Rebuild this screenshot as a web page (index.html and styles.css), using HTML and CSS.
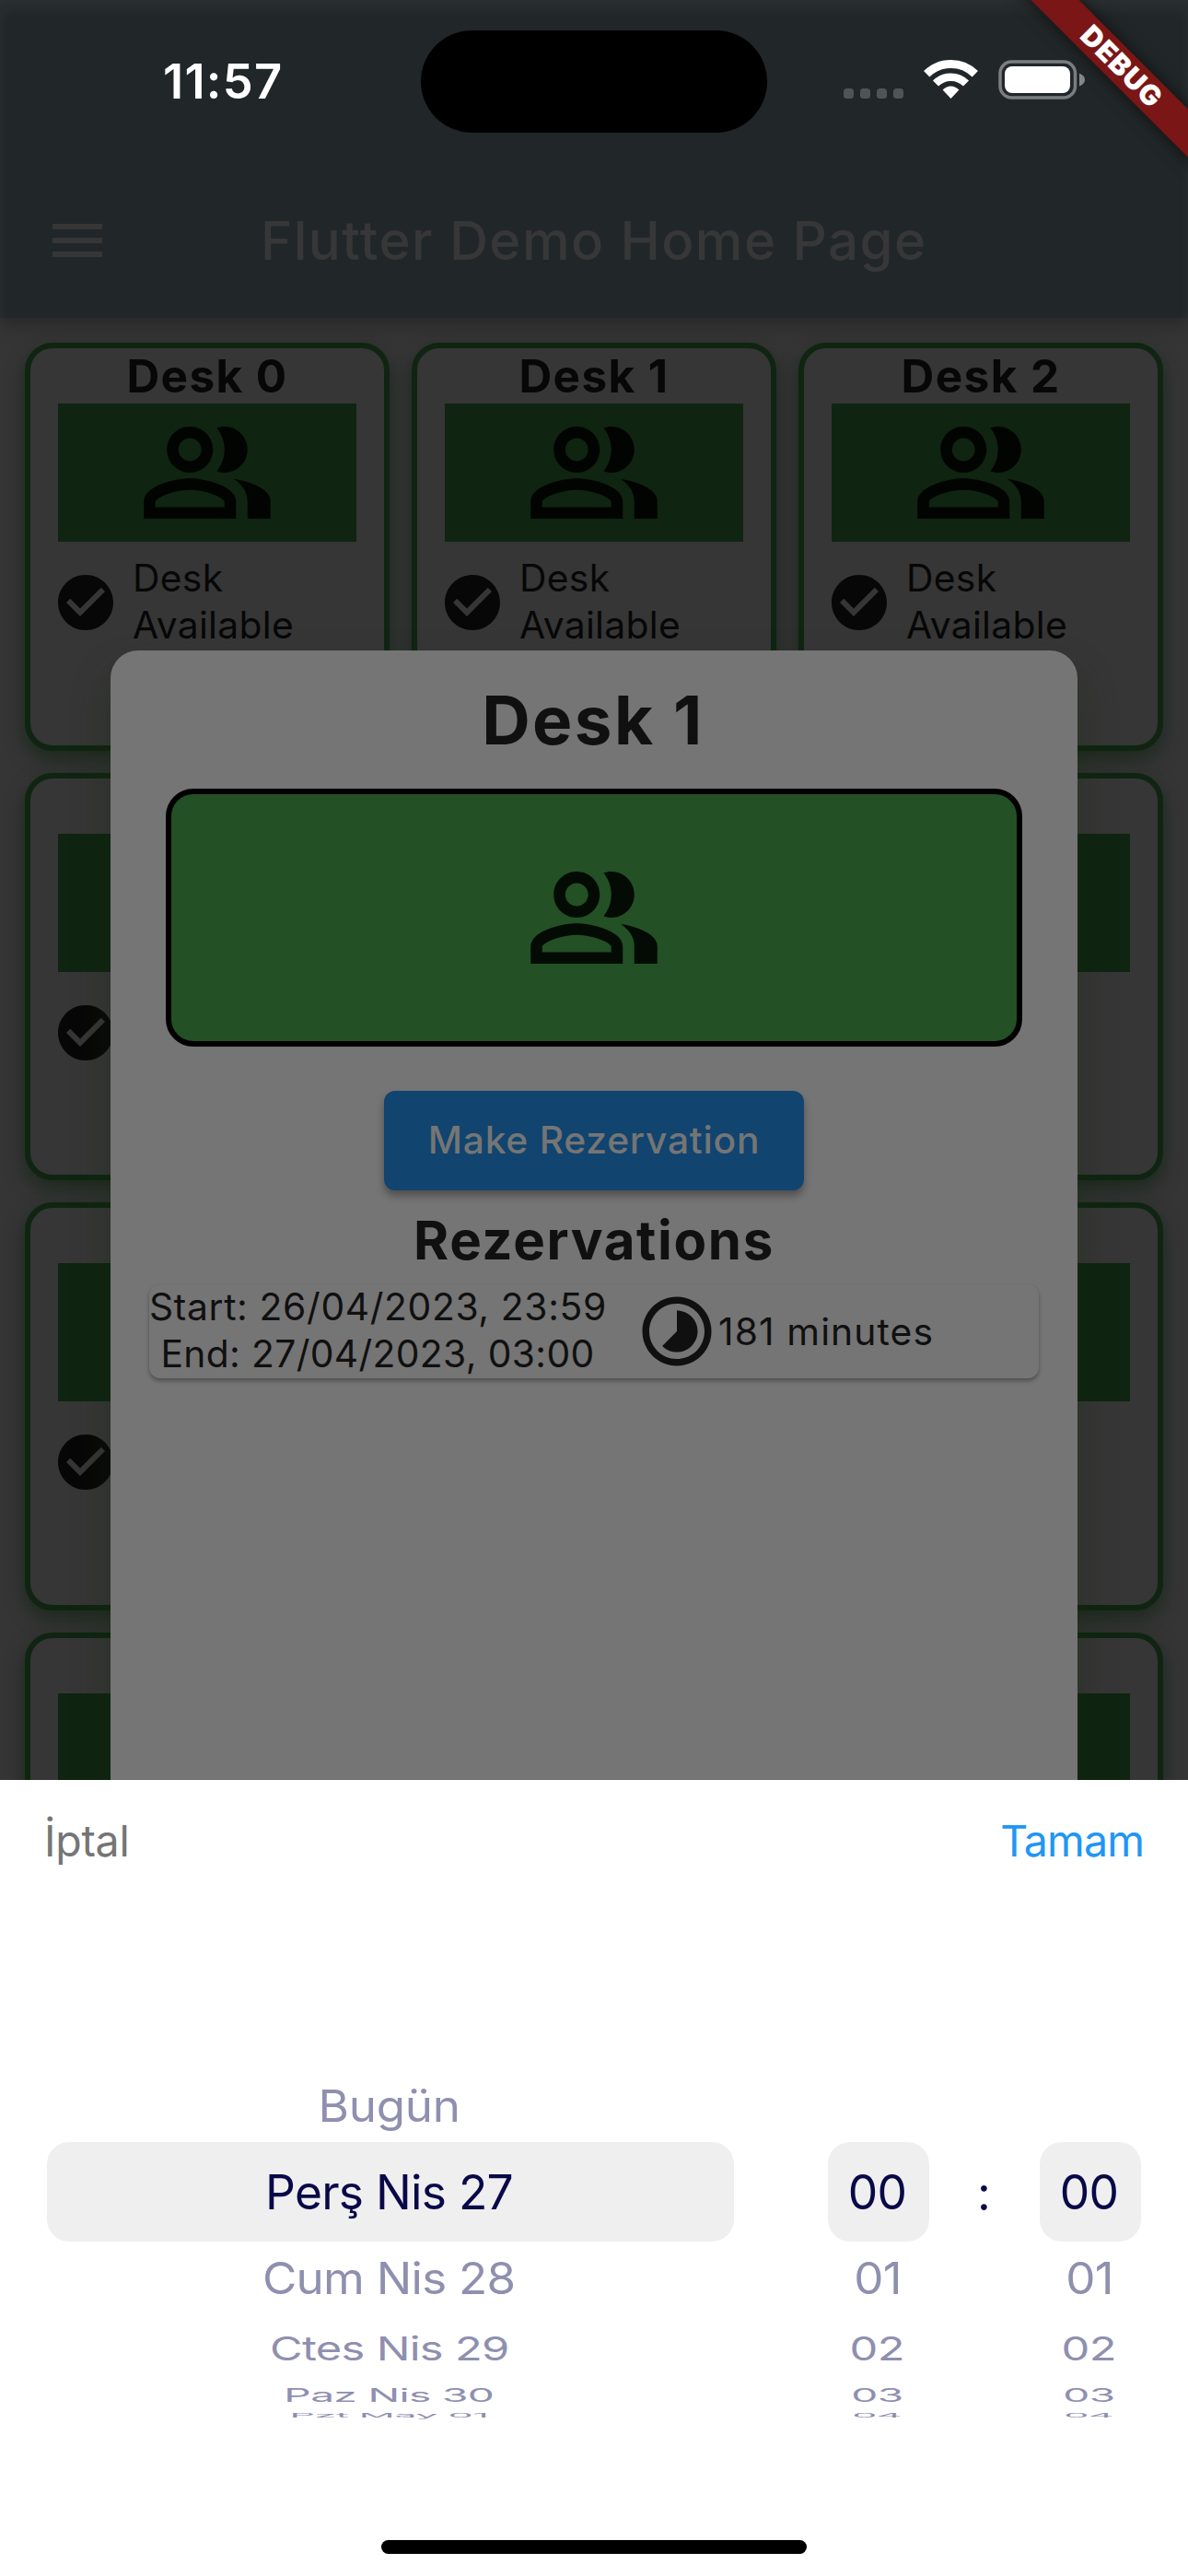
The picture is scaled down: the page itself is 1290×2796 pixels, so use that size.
FILE: index.html
```html
<!DOCTYPE html>
<html lang="tr">
<head>
<meta charset="utf-8">
<title>Flutter Demo Home Page</title>
<link rel="stylesheet" href="styles.css">
</head>
<body>
<svg class="defs" width="0" height="0" aria-hidden="true">
  <symbol id="people" viewBox="0 0 24 24"><path d="M16.67 13.13C18.04 14.06 19 15.32 19 17v3h4v-3c0-2.18-3.57-3.47-6.33-3.87zM15 12c2.21 0 4-1.79 4-4s-1.79-4-4-4c-.47 0-.91.1-1.33.24C14.5 5.27 15 6.58 15 8s-.5 2.73-1.33 3.76c.42.14.86.24 1.33.24zM9 12c2.21 0 4-1.79 4-4s-1.79-4-4-4-4 1.79-4 4 1.79 4 4 4zm0-6c1.1 0 2 .9 2 2s-.9 2-2 2-2-.9-2-2 .9-2 2-2zM9 13c-2.67 0-8 1.34-8 4v3h16v-3c0-2.66-5.33-4-8-4zm6 5H3v-.99C3.2 16.29 6.3 15 9 15s5.8 1.29 6 2v1z"/></symbol>
  <symbol id="check" viewBox="0 0 24 24"><path d="M12 2C6.48 2 2 6.48 2 12s4.48 10 10 10 10-4.48 10-10S17.52 2 12 2zm-2 15l-5-5 1.41-1.41L10 14.17l7.59-7.59L19 8l-9 9z"/></symbol>
</svg>

<div class="screen">
  <header class="appbar">
    <div class="status">
      <span class="time">11:57</span>
      <span class="island"></span>
      <svg class="indicators" width="264" height="47" viewBox="0 0 264 47">
        <g fill="#505458"><rect y="31" width="11" height="11" rx="3.5"/><rect x="18" y="31" width="11" height="11" rx="3.5"/><rect x="36" y="31" width="11" height="11" rx="3.5"/><rect x="54" y="31" width="11" height="11" rx="3.5"/></g>
        <g fill="none" stroke="#fff"><path stroke-width="9" d="M90.2 15.3A37.5 37.5 0 0 1 142.8 15.3"/><path stroke-width="8.5" d="M100 25.6A23.2 23.2 0 0 1 133 25.6"/></g>
        <path fill="#fff" d="M116.5 42L107.6 32.6Q116.5 24.5 125.4 32.6Z"/>
        <rect x="170" y="2" width="81.5" height="39" rx="12.5" fill="none" stroke="#7b7e81" stroke-width="3.5"/>
        <rect x="175" y="7" width="71" height="29" rx="8" fill="#fff"/>
        <path fill="#85888a" d="M256 14.5Q262 17 262 21.5T256 28.5Z"/>
      </svg>
    </div>
    <div class="toolbar">
      <svg class="menu" width="54" height="36"><path fill="#363636" d="M0 0h54v6H0zM0 15h54v6H0zM0 30h54v6H0z"/></svg>
      <h1>Flutter Demo Home Page</h1>
    </div>
  </header>

  <main class="desks">
    <article class="card">
      <h2>Desk 0</h2>
      <div class="seat"><svg><use href="#people"/></svg></div>
      <div class="state"><svg><use href="#check"/></svg><p>Desk<br>Available</p></div>
    </article>
    <article class="card">
      <h2>Desk 1</h2>
      <div class="seat"><svg><use href="#people"/></svg></div>
      <div class="state"><svg><use href="#check"/></svg><p>Desk<br>Available</p></div>
    </article>
    <article class="card">
      <h2>Desk 2</h2>
      <div class="seat"><svg><use href="#people"/></svg></div>
      <div class="state"><svg><use href="#check"/></svg><p>Desk<br>Available</p></div>
    </article>
    <article class="card first"><h2></h2><div class="seat"></div><div class="state"><svg><use href="#check"/></svg></div></article>
    <article class="card last"><h2></h2><div class="seat"></div></article>
    <article class="card first"><h2></h2><div class="seat"></div><div class="state"><svg><use href="#check"/></svg></div></article>
    <article class="card last"><h2></h2><div class="seat"></div></article>
    <article class="card first"><h2></h2><div class="seat"></div></article>
    <article class="card last"><h2></h2><div class="seat"></div></article>
  </main>

  <section class="dialog">
    <h2>Desk 1</h2>
    <div class="hero"><svg><use href="#people"/></svg></div>
    <button class="book">Make Rezervation</button>
    <h3>Rezervations</h3>
    <div class="slot">
      <div class="range"><p class="start">Start: 26/04/2023, 23:59</p><p class="end">End: 27/04/2023, 03:00</p></div>
      <svg class="clock" viewBox="0 0 24 24"><path d="M16.24 7.76C15.07 6.59 13.54 6 12 6v6l-4.24 4.24c2.34 2.34 6.14 2.34 8.49 0 2.34-2.34 2.34-6.14-.01-8.48zM12 2C6.48 2 2 6.48 2 12s4.48 10 10 10 10-4.48 10-10S17.52 2 12 2zm0 18c-4.42 0-8-3.58-8-8s3.58-8 8-8 8 3.58 8 8-3.58 8-8 8z"/></svg>
      <span class="length">181 minutes</span>
    </div>
  </section>

  <section class="sheet">
    <div class="actions"><span class="cancel">İptal</span><span class="done">Tamam</span></div>
    <div class="picker">
      <div class="wheel dates">
        <div class="row above"><span class="near short">Bugün</span></div>
        <div class="row selected"><span>Perş Nis 27</span></div>
        <div class="row below1"><span class="near">Cum Nis 28</span></div>
        <div class="row below2"><span class="mid">Ctes Nis 29</span></div>
        <div class="row below3"><span class="far">Paz Nis 30</span></div>
        <div class="row below4"><span class="edge">Pzt May 01</span></div>
      </div>
      <div class="wheel digits">
        <div class="row above"></div>
        <div class="row selected"><span>00</span></div>
        <div class="row below1"><span class="near">01</span></div>
        <div class="row below2"><span class="mid">02</span></div>
        <div class="row below3"><span class="far">03</span></div>
        <div class="row below4"><span class="edge">04</span></div>
      </div>
      <div class="colon">:</div>
      <div class="wheel digits">
        <div class="row above"></div>
        <div class="row selected"><span>00</span></div>
        <div class="row below1"><span class="near">01</span></div>
        <div class="row below2"><span class="mid">02</span></div>
        <div class="row below3"><span class="far">03</span></div>
        <div class="row below4"><span class="edge">04</span></div>
      </div>
    </div>
    <div class="home"></div>
  </section>

  <div class="corner"><div class="ribbon">DEBUG</div></div>
</div>
</body>
</html>
```
FILE: styles.css
```css
* { box-sizing: border-box; margin: 0; padding: 0; }
body { font-family: Inter, "Liberation Sans", sans-serif; background: #353535; }
.defs { display: block; }
.screen { position: relative; width: 1290px; height: 2796px; overflow: hidden; background: #353535; }

.appbar {
  position: relative; height: 345px; background: #212629;
  box-shadow: inset 0 10px 16px rgba(255, 255, 255, .045), inset 0 0 10px rgba(255, 255, 255, .02), 0 8px 18px rgba(0, 0, 0, .25);
}
.status { display: grid; grid-template-columns: 457px 376px 1fr; align-items: center; height: 177px; }
.time { padding: 0 0 2px 177px; font-size: 52.4px; font-weight: 600; letter-spacing: 1.26px; color: #fff; }
.island { height: 111px; border-radius: 56px; background: #000; }
.indicators { margin-left: 83px; }
.toolbar { display: flex; align-items: center; height: 168px; padding-left: 57px; }
.toolbar h1 { margin-left: 172px; font-size: 58.2px; font-weight: 500; letter-spacing: 1.42px; color: #373737; white-space: nowrap; }

.desks { display: grid; grid-template-columns: repeat(3, 396px); grid-auto-rows: 442.67px; gap: 24px; padding: 27px; }
.card {
  padding: 0 30px; border: 6px solid #0f2511; border-radius: 30px; background: #363636;
  box-shadow: 0 9px 20px rgba(15, 34, 18, .65);
}
.card.first { grid-column: 1; }
.card.last { grid-column: 3; }
.card h2 { height: 60px; line-height: 60px; font-size: 49.5px; font-weight: 700; letter-spacing: 1.4px; text-align: center; color: #070707; }
.seat { display: flex; justify-content: center; height: 150px; background: #0f2411; }
.seat svg, .hero svg { width: 150px; height: 150px; fill: #020401; }
.state { display: flex; align-items: center; height: 100px; margin: 15px 0 0 -6px; font-size: 40.8px; line-height: 51px; letter-spacing: .3px; color: #070707; }
.state p { margin-top: -1px; }
.state svg { width: 72px; height: 72px; margin: 2px 15px 0 0; fill: #070707; }

.dialog {
  position: absolute; top: 706px; left: 120px; width: 1050px; height: 1400px; padding: 3px 42px 0;
  display: flex; flex-direction: column; align-items: center;
  border-radius: 30px; background: #757575; color: #101010;
  box-shadow: 0 24px 42px rgba(22, 42, 16, .4);
}
.dialog h2 { margin-right: 2px; line-height: 147px; font-size: 72.7px; font-weight: 700; letter-spacing: 2.4px; }
.hero { display: flex; align-items: center; justify-content: center; width: 930px; height: 280px; border: 6px solid #000; border-radius: 30px; background: #235025; }
.hero svg { fill: #040b04; }
.book {
  width: 456px; height: 108px; margin-top: 48px; padding-bottom: 2px; border: 0; border-radius: 12px; background: #11446f; color: #757575;
  font: 500 40.8px Inter, "Liberation Sans", sans-serif; letter-spacing: .74px; white-space: nowrap;
  box-shadow: 0 6px 9px rgba(0, 0, 0, .32);
}
.dialog h3 { margin-top: 6px; line-height: 96px; font-size: 58.2px; font-weight: 700; letter-spacing: 1.65px; }
.slot {
  display: flex; align-items: center; width: 966px; height: 102px; border-radius: 12px;
  font-size: 40.8px; box-shadow: 0 3px 4px rgba(0, 0, 0, .3), 0 0 2px rgba(0, 0, 0, .06);
}
.range { width: 496px; margin-top: -2px; line-height: 50.6px; text-align: center; white-space: nowrap; }
.start { letter-spacing: .63px; }
.end { letter-spacing: .35px; }
.clock { width: 90px; height: 90px; margin-left: 32px; fill: #101010; }
.length { letter-spacing: 1.1px; }

.sheet { position: absolute; top: 1932px; left: 0; width: 1290px; height: 864px; background: #fff; font-size: 46.5px; }
.actions { display: flex; justify-content: space-between; height: 132px; padding: 0 48px; line-height: 132px; }
.cancel { color: #757575; letter-spacing: -.28px; }
.done { color: #2196f3; letter-spacing: -.89px; }
.picker { display: flex; padding: 183px 0 0 51px; color: #090849; font-size: 51.5px; letter-spacing: -.75px; }
.dates { width: 746px; margin-right: 102px; }
.digits { width: 110px; }
.row { display: flex; align-items: center; justify-content: center; padding-right: 3px; color: #8f8fb0; white-space: nowrap; }
.row span { line-height: 1; }
.above { height: 78px; }
.selected { height: 108px; padding-top: 2px; border-radius: 24px; background: #efefef; color: #090849; }
.below1 { height: 79px; }
.below2 { height: 75px; }
.below3 { height: 26px; }
.below4 { height: 18px; }
.near { transform: scale(.993, .93); }
.short { letter-spacing: -.3px; }
.mid { transform: scale(.948, .695); }
.far { transform: scale(.895, .39); }
.edge { transform: scale(.84, .12); }
.colon { width: 120px; padding: 79px 2px 0 0; line-height: 108px; text-align: center; }
.home { width: 462px; height: 15px; margin: 126px auto 0; border-radius: 8px; background: #000; }

.corner { position: absolute; top: 0; right: 0; width: 200px; height: 200px; overflow: hidden; }
.ribbon {
  position: absolute; left: -32px; top: 53.6px; width: 320px; height: 36.8px; line-height: 36.8px;
  transform: rotate(45deg); background: #7a1616; color: #fff; text-align: center;
  font-size: 30.5px; font-weight: 900; letter-spacing: 1px; box-shadow: 0 0 18px rgba(0, 0, 0, .6);
}
```
